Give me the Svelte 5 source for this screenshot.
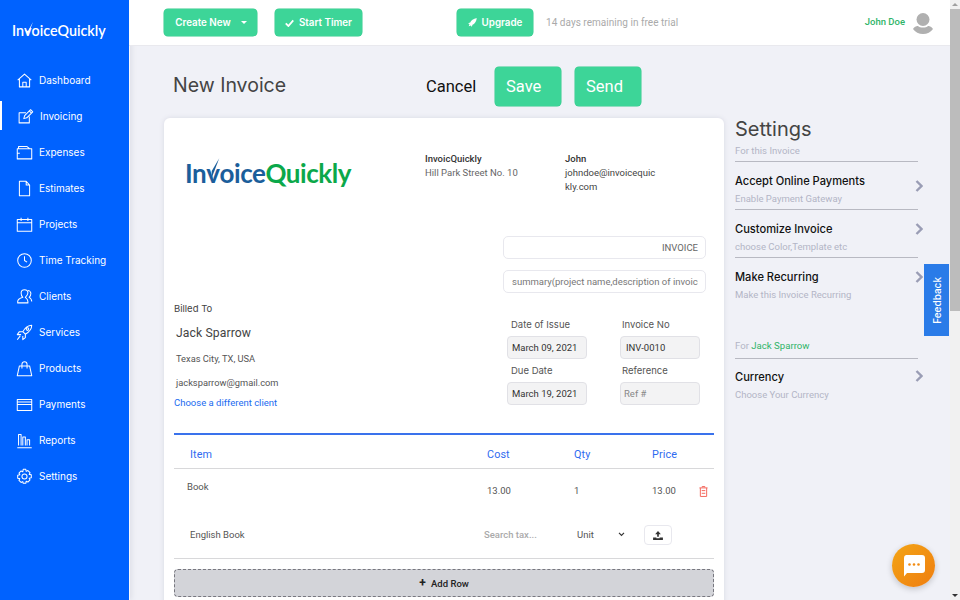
<script>
  const nav = [
    { label: 'Dashboard', icon: 'M2 9.500 10 2.500l8 7M4 8v9.500h12V8M8 17.500V12h4v5.500' },
    { label: 'Invoicing', icon: 'M14.500 10v7.500H2.500v-12h8M8 12.500l1-3.500 7-7 2.500 2.500-7 7zM14.500 3.500l2.500 2.500', active: true },
    { label: 'Expenses', icon: 'M3 5.500V3h10l3 2.500M1.500 5.500h17v12h-17zM1.500 11h3' },
    { label: 'Estimates', icon: 'M4 1.500h8l4 4.500v12.500H4zM12 1.500V6h4' },
    { label: 'Projects', icon: 'M1.500 4h17v14h-17zM1.500 8h17M6 2v4M14 2v4' },
    { label: 'Time Tracking', icon: 'M10 2a8 8 0 1 0 0 16 8 8 0 0 0 0-16zM10 5v5l3 2' },
    { label: 'Clients', icon: 'M10 2C7 2 6 4 6 6s1 4 2 5c-3 1-6 2-6 5v1.500h12V16c0-3-2-4-3-5 1-1 3-3 3-5s-1-4-4-4zM14 3c2 0 3.500 2 3.500 3.500 0 2-1 3.500-2 4.500 2 1 3 3 3 5' },
    { label: 'Services', icon: 'M18.500 1.500c-5 0-8 3-10.500 7.500l3 3c4.500-2.500 7.500-5.500 7.500-10.500zM8 9H4l-2.500 3.500h4.500M11 12v4l-3 2.500V14M5 14l-3.500 4.500M12 6a1.500 1.500 0 1 0 3 0 1.500 1.500 0 0 0-3 0z' },
    { label: 'Products', icon: 'M4 7h12l2.500 11.500h-17zM7 10V5a3 3 0 0 1 6 0v5' },
    { label: 'Payments', icon: 'M1.500 4h17v13h-17zM1.500 7h17M1.500 10h17' },
    { label: 'Reports', icon: 'M1.500 18.500h17M3 16V3h3v13M8 16V6h3v10M13 16V9h3v7' },
    { label: 'Settings', icon: 'M8.500 1.500h3l.5 2.500 2-1 2.500 2.500-1 2 2.500.5v3.500l-2.500.5 1 2-2.500 2.500-2-1-.5 2.500h-3L8 16l-2 1-2.500-2.500 1-2-2.500-.5V8.500L4.500 8l-1-2L6 3.500l2 1zM10 7a3 3 0 1 0 0 6 3 3 0 0 0 0-6z' }
  ]

  const upper = [
    { title: 'Accept Online Payments', sub: 'Enable Payment Gateway' },
    { title: 'Customize Invoice', sub: 'choose Color,Template etc' },
    { title: 'Make Recurring', sub: 'Make this Invoice Recurring' }
  ]
</script>

{#snippet chevron()}
  <svg class="chev" viewBox="0 0 8 12" width="8" height="12"><path d="M1.500 1 6.500 6l-5 5" fill="none" stroke="#9a9db5" stroke-width="2.400"/></svg>
{/snippet}

<div class="page">
  <aside class="sidebar">
    <div class="brand">
      In<span class="v">v<svg viewBox="0 0 10 14" width="10" height="14"><path d="M1 8l3 5 5-13-5 9z" fill="#fff"/></svg></span>oiceQuickly
    </div>
    <nav>
      {#each nav as item}
        <div class="nav-item" class:active={item.active}>
          <svg viewBox="0 0 20 20" width="17" height="17"><path d={item.icon} fill="none" stroke="#fff" stroke-width="1.200" stroke-linejoin="round"/></svg>
          <span>{item.label}</span>
        </div>
      {/each}
    </nav>
  </aside>

  <div class="main">
    <header>
      <button class="green create">Create New <i class="caret"></i></button>
      <button class="green timer">
        <svg viewBox="0 0 12 10" width="9" height="8"><path d="M1 5.500 4.500 9 11 1.500" fill="none" stroke="#fff" stroke-width="2.400"/></svg>
        Start Timer
      </button>
      <button class="green upgrade">
        <svg viewBox="0 0 12 12" width="9" height="9"><path d="M12 0C7 1 4 3 3 6L0 7l2 1-1 3 3-1 1 2 1-3c3-1 5-4 6-10z" fill="#fff"/></svg>
        Upgrade
      </button>
      <span class="trial">14 days remaining in free trial</span>
      <span class="user">John Doe</span>
      <svg class="avatar" viewBox="0 0 22 22" width="22" height="22"><circle cx="11" cy="7.500" r="6.500" fill="#b0b0b0"/><path d="M1 17c2-3 4-3 5-3 2 2 8 2 10 0 1 0 3 0 5 3-2 3-6 5-10 5S3 20 1 17z" fill="#b0b0b0"/></svg>
    </header>

    <div class="content">
      <div class="title-row">
        <h1>New Invoice</h1>
        <span class="cancel">Cancel</span>
        <button class="big save">Save</button>
        <button class="big">Send</button>
      </div>

      <div class="body">
        <section class="card">
          <div class="top">
            <div class="logo">In<span class="v">v<svg viewBox="0 0 20 30" width="15" height="23"><path d="M9 26 19 0 9 17z" fill="#1b5e9b"/></svg></span>oice<b>Quickly</b></div>
            <div class="company"><strong>InvoicQuickly</strong><br />Hill Park Street No. 10</div>
            <div class="contact"><strong>John</strong><br />johndoe@invoicequickly.com</div>
          </div>

          <div class="heading-inputs">
            <div class="field doc">INVOICE</div>
            <div class="field summary"><span>summary(project name,description of invoice)</span></div>
          </div>

          <div class="bill">
            <div class="client">
              <div class="billed">Billed To</div>
              <div class="name">Jack Sparrow</div>
              <div class="addr">Texas City, TX, USA</div>
              <div class="mail">jacksparrow@gmail.com</div>
              <div class="choose">Choose a different client</div>
            </div>
            <div class="meta">
              <div class="col-a">
                <label for="d1">Date of Issue</label>
                <div id="d1" class="box">March 09, 2021</div>
                <label for="d2">Due Date</label>
                <div id="d2" class="box">March 19, 2021</div>
              </div>
              <div class="col-b">
                <label for="d3">Invoice No</label>
                <div id="d3" class="box no">INV-0010</div>
                <label for="d4">Reference</label>
                <div id="d4" class="box ref">Ref #</div>
              </div>
            </div>
          </div>

          <div class="items">
            <div class="row head">
              <span class="c-item">Item</span><span class="c-cost">Cost</span><span class="c-qty">Qty</span><span class="c-price">Price</span>
            </div>
            <div class="row line-a">
              <span class="c-item book">Book</span><span class="c-cost">13.00</span><span class="c-qty">1</span><span class="c-price">13.00</span>
              <svg class="trash" viewBox="0 0 10 12" width="9" height="11"><path d="M3.500 1.500V.5h3v1M.5 2h9M1.500 2v9.500h7V2M3 5h4M3 8h4" fill="none" stroke="#f4685e" stroke-width="1.100"/></svg>
            </div>
            <div class="row line-b">
              <span class="c-item desc">English Book</span>
              <span class="tax">Search tax...</span>
              <span class="unit">Unit</span>
              <svg class="down" viewBox="0 0 8 6" width="7" height="5"><path d="M1 1l3 3 3-3" fill="none" stroke="#333" stroke-width="1.400"/></svg>
              <span class="upload"><svg viewBox="0 0 12 11" width="10" height="9"><path d="M6 0 2.500 4H5v3h2V4h2.500zM0 8h4v1h4V8h4v3H0z" fill="#333"/></svg></span>
            </div>
            <div class="add"><b>+</b> Add Row</div>
          </div>
        </section>

        <aside class="settings">
          <h2>Settings</h2>
          <div class="for">For this Invoice</div>
          {#each upper as s, i}
            <div class="opt" class:first={i === 0} class:plain={i === 2}>
              <div class="opt-title">{s.title}</div>
              <div class="opt-sub">{s.sub}</div>
              {@render chevron()}
            </div>
          {/each}
          <div class="for client-for">For <em>Jack Sparrow</em></div>
          <div class="opt plain last">
            <div class="opt-title">Currency</div>
            <div class="opt-sub">Choose Your Currency</div>
            {@render chevron()}
          </div>
        </aside>
      </div>
    </div>
  </div>

  <div class="scrollbar">
    <i class="up"></i>
    <div class="thumb"></div>
    <i class="dn"></i>
  </div>

  <div class="feedback"><span>Feedback</span></div>
  <div class="chat">
    <svg viewBox="0 0 22 22" width="22" height="22"><path d="M3 0h16a3 3 0 0 1 3 3v12a3 3 0 0 1-3 3H4l-3 3.500V3a3 3 0 0 1 2-3z" fill="#fff"/><circle cx="6.500" cy="9.500" r="1.300" fill="#f28c12"/><circle cx="11" cy="9.500" r="1.300" fill="#f28c12"/><circle cx="15.500" cy="9.500" r="1.300" fill="#f28c12"/></svg>
  </div>
</div>

<style>
  :global(body) { margin: 0; }

  .page {
    position: relative;
    display: flex;
    width: 960px;
    height: 600px;
    overflow: hidden;
    background: #f0f1f7;
    font-family: Roboto, sans-serif;
    color: #444;
  }

  /* sidebar */
  .sidebar {
    flex: none;
    width: 129px;
    background: #0062ff;
    box-shadow: 1px 0 0 #fafafe, 3px 0 5px #dfe0e8;
    color: #fff;
  }
  .brand {
    padding: 21px 0 0 12px;
    height: 41px;
    font: 600 14.300px Lato, sans-serif;
    line-height: 20px;
    white-space: nowrap;
  }
  .v { position: relative; display: inline-block; }
  .brand .v svg { position: absolute; left: 0; top: 1px; }
  .brand .v { color: #fff; }
  nav { display: flex; flex-direction: column; }
  .nav-item {
    display: flex;
    align-items: center;
    gap: 6px;
    height: 36px;
    padding-left: 16px;
    font: 400 10px Inter, sans-serif;
  }
  .nav-item.active { position: relative; padding-left: 17px; }
  .nav-item.active::before {
    content: '';
    position: absolute;
    left: 0;
    top: 3px;
    bottom: 4px;
    width: 2px;
    background: #fff;
  }

  .main { flex: 1; min-width: 0; }

  /* top bar */
  header {
    display: flex;
    align-items: center;
    height: 46px;
    padding-left: 35px;
    background: #fff;
    border-bottom: 1px solid #e9e9ee;
    box-sizing: border-box;
  }
  button {
    border: 0;
    color: #fff;
    background: #3dd598;
    padding: 0;
    cursor: pointer;
  }
  .green {
    display: flex;
    align-items: center;
    justify-content: center;
    gap: 5px;
    height: 27px;
    border-radius: 4px;
    font: 600 9.800px Inter, sans-serif;
    box-shadow: 0 0 0 0.5px #35c98c;
  }
  .create { width: 93px; gap: 10px; padding-left: 1px; }
  .timer { width: 87px; margin-left: 18px; }
  .upgrade { width: 76px; margin-left: 95px; }
  .caret { border: 3px solid transparent; border-top: 3px solid #fff; border-bottom: 0; width: 0; height: 0; }
  .trial { margin-left: 13px; font-size: 10px; color: #aaa; letter-spacing: 0.03px; }
  .user { margin-left: auto; margin-right: 7px; margin-top: -2px; font-size: 9.500px; font-weight: 500; color: #2fb468; }
  .avatar { margin-right: 16px; }

  /* title row */
  .title-row {
    display: flex;
    align-items: center;
    height: 72px;
    padding: 9px 0 0 44px;
    box-sizing: border-box;
  }
  h1 { margin: -3px 0 0; width: 253px; font: 400 19.500px Inter, sans-serif; color: #444; }
  .cancel { width: 69px; font-size: 16.500px; color: #111; }
  .big {
    width: 66px;
    height: 39px;
    margin-right: 14px;
    padding-left: 11px;
    border-radius: 4px;
    font: 400 16.500px Roboto, sans-serif;
    text-align: left;
    box-shadow: 0 0 0 0.5px #35c98c;
  }

  .body { display: flex; padding-left: 35px; }

  /* invoice card */
  .card {
    flex: none;
    width: 560px;
    height: 500px;
    background: #fff;
    border-radius: 6px;
    box-shadow: 0 0 5px #d8d9e3;
    padding: 0 10px;
    box-sizing: border-box;
  }
  .top { display: flex; height: 118px; padding-top: 34px; box-sizing: border-box; font-size: 9.500px; line-height: 14px; }
  .logo {
    width: 251px;
    padding: 1px 0 0 11px;
    font: 700 26px Lato, sans-serif;
    letter-spacing: -0.45px;
    color: #1b5e9b;
    line-height: 40px;
    box-sizing: border-box;
    white-space: nowrap;
  }
  .logo b { color: #0ba84a; font-weight: 700; }
  .logo .v svg { position: absolute; left: -1px; top: 5px; }
  .company { width: 140px; color: #666; }
  .contact { width: 94px; color: #444; word-break: break-all; }
  strong { font-weight: 500; color: #333; }

  .heading-inputs { display: flex; flex-direction: column; gap: 11px; margin-left: 329px; width: 203px; }
  .field {
    height: 23px;
    border: 1px solid #e8e8ee;
    border-radius: 5px;
    box-sizing: border-box;
    font-size: 9.500px;
    line-height: 21px;
    padding: 0 7px 0 8px;
    color: #666;
    overflow: hidden;
    white-space: nowrap;
  }
  .doc { text-align: right; }
  .summary { color: #777; }
  .summary span { display: block; overflow: hidden; }

  .bill { display: flex; margin-top: 9px; height: 131px; }
  .client { width: 333px; }
  .billed { font: 400 9.500px/13px Inter, sans-serif; color: #444; }
  .name { margin: 9px 0 0 2px; font-size: 12.200px; line-height: 18px; color: #444; letter-spacing: 0.1px; }
  .addr { margin: 10px 0 0 2px; font-size: 9.300px; line-height: 14px; color: #555; }
  .mail { margin: 10px 0 0 2px; font-size: 9.300px; line-height: 14px; color: #555; }
  .choose { margin-top: 6px; font-size: 9.500px; line-height: 14px; color: #1a6bf0; }

  .meta { display: flex; padding-top: 17px; }
  .col-a { width: 113px; }
  .col-b { width: 79px; }
  label { display: block; height: 17px; padding-left: 4px; font: 400 9.500px/12px Inter, sans-serif; color: #555; }
  .col-b label { padding-left: 2px; }
  .box {
    width: 80px;
    height: 23px;
    margin: 0 0 6px;
    border: 1px solid #e1e1e6;
    border-radius: 4px;
    background: #f3f3f4;
    box-sizing: border-box;
    padding-left: 4px;
    font-size: 9.500px;
    line-height: 21px;
    color: #333;
  }
  .col-b .box { padding-left: 5px; }
  .col-b .box.ref { color: #888; padding-left: 3px; }

  /* line items */
  .items { border-top: 2px solid #3a72ec; }
  .row { display: flex; align-items: flex-start; position: relative; }
  .c-item { width: 313px; padding-left: 16px; box-sizing: border-box; }
  .c-cost { width: 87px; }
  .c-qty { width: 78px; }
  .head {
    height: 34px;
    padding-top: 13px;
    box-sizing: border-box;
    border-bottom: 1px solid #d8d8da;
    font-size: 10.800px;
    line-height: 14px;
    color: #2f6bf0;
    letter-spacing: 0.1px;
  }
  .line-a { height: 45px; font-size: 9.500px; color: #555; padding-top: 15px; box-sizing: border-box; line-height: 14px; }
  .book { padding-left: 13px; margin-top: -4px; }
  .trash { position: absolute; left: 525px; top: 17px; }
  .line-b { height: 45px; font-size: 9.500px; color: #555; border-bottom: 1px solid #d8d8da; padding-top: 14px; box-sizing: border-box; line-height: 14px; }
  .desc { padding-left: 16px; width: 310px; }
  .tax { width: 93px; font-weight: 500; color: #aaa; }
  .unit { width: 41px; color: #555; }
  .down { margin-top: 4px; }
  .upload {
    display: flex;
    align-items: center;
    justify-content: center;
    width: 28px;
    height: 20px;
    margin: -3px 0 0 19px;
    border: 1px solid #e8e8ee;
    border-radius: 4px;
    box-sizing: border-box;
  }
  .add {
    height: 28px;
    margin-top: 10px;
    border: 1px dashed #77777f;
    border-radius: 4px;
    background: #d3d4d9;
    box-sizing: border-box;
    text-align: center;
    font-size: 9.500px;
    font-weight: 500;
    line-height: 27px;
    color: #222;
  }
  .add b { font-size: 12px; margin-right: 3px; }

  /* settings column */
  .settings { width: 183px; margin-left: 11px; font-size: 9.600px; }
  h2 { margin: -1px 0 3px; font: 400 20px/24px Inter, sans-serif; color: #444; }
  .for { height: 18px; margin-top: 2px; border-bottom: 1px solid #b8b9c2; box-sizing: border-box; line-height: 14px; color: #b3b5c6; }
  .client-for { height: 20px; margin-top: 33px; }
  .client-for em { font-style: normal; color: #2fb468; }
  .opt { position: relative; height: 48px; padding-top: 12px; border-bottom: 1px solid #b8b9c2; box-sizing: border-box; }
  .plain { border-bottom: 0; }
  .last { padding-top: 11px; }
  .opt-title { font: 500 11.100px/15px Inter, sans-serif; color: #111; }
  .opt-sub { margin-top: 3px; font-size: 9.500px; line-height: 13px; color: #b3b5c6; }
  .chev { position: absolute; left: 180px; top: 13px; }
  .first .chev { top: 18px; }
  .last .chev { top: 11px; }

  /* floating */
  .scrollbar {
    flex: none;
    display: flex;
    flex-direction: column;
    align-items: center;
    width: 10px;
    background: #f1f1f1;
  }
  .thumb { width: 100%; height: 302px; background: #bcbcbc; }
  .up, .dn { width: 0; height: 0; border: 3px solid transparent; }
  .up { margin: 3px 0 3px; border-top: 0; border-bottom: 3px solid #a0a0a0; }
  .dn { margin-top: auto; margin-bottom: 3px; border-bottom: 0; border-top: 3px solid #333; }
  .feedback {
    position: absolute;
    left: 924px;
    top: 264px;
    display: flex;
    align-items: center;
    justify-content: center;
    width: 25px;
    height: 72px;
    background: #2a7be8;
    color: #fff;
    font: 500 10px Inter, sans-serif;
  }
  .feedback span { writing-mode: vertical-rl; transform: rotate(180deg); }
  .chat {
    position: absolute;
    left: 892px;
    top: 544px;
    display: flex;
    align-items: center;
    justify-content: center;
    width: 43px;
    height: 43px;
    border-radius: 50%;
    background: linear-gradient(135deg, #f3a515, #ef7d10);
    box-shadow: 0 2px 6px rgba(0, 0, 0, 0.2);
  }
</style>
